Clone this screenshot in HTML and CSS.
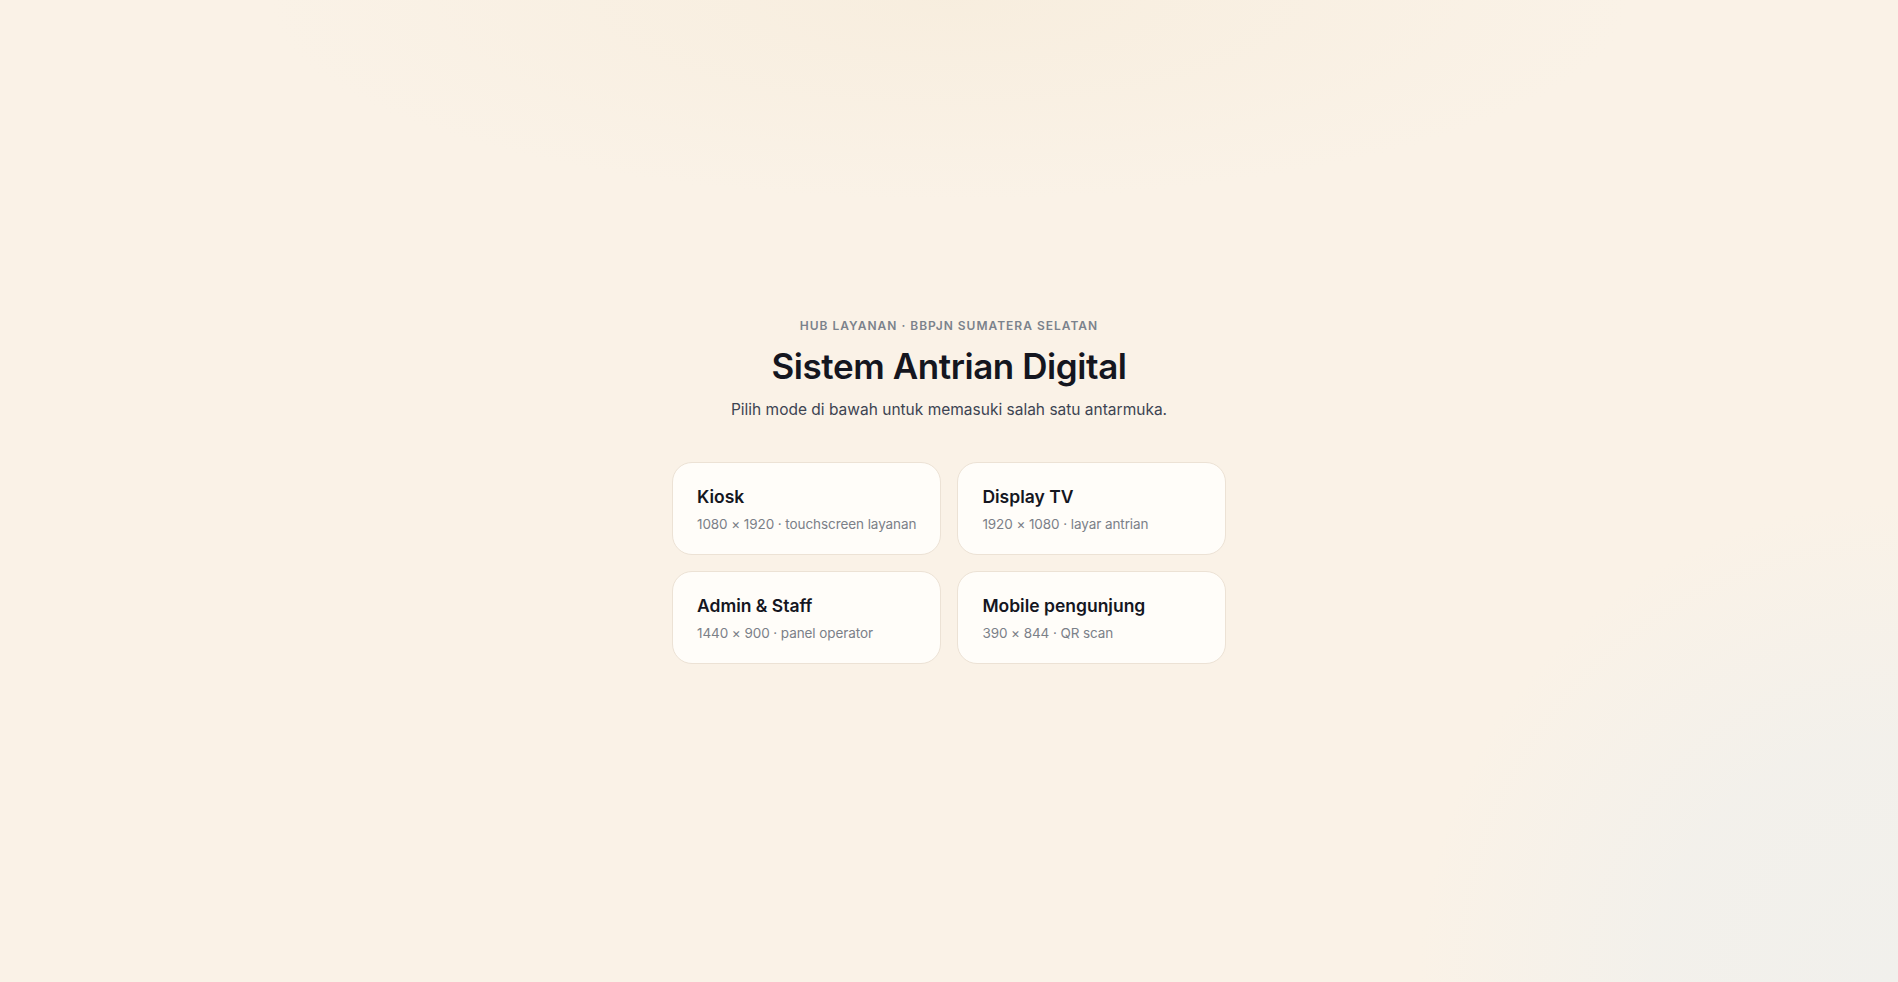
FILE: index.html
```html
<!DOCTYPE html>
<html lang="id">
<head>
  <meta charset="UTF-8">
  <meta name="viewport" content="width=device-width, initial-scale=1.0">
  <title>Sistem Antrian Digital</title>
  <link rel="stylesheet" href="styles.css">
</head>
<body>
  <main class="hub">
    <p class="eyebrow">Hub Layanan · BBPJN Sumatera Selatan</p>
    <h1>Sistem Antrian Digital</h1>
    <p class="lead">Pilih mode di bawah untuk memasuki salah satu antarmuka.</p>

    <div class="modes">
      <a href="kiosk.html" class="mode-card">
        <span class="mode-title">Kiosk</span>
        <span class="mode-meta">1080 × 1920 · touchscreen layanan</span>
      </a>
      <a href="display.html" class="mode-card">
        <span class="mode-title">Display TV</span>
        <span class="mode-meta">1920 × 1080 · layar antrian</span>
      </a>
      <a href="admin.html" class="mode-card">
        <span class="mode-title">Admin &amp; Staff</span>
        <span class="mode-meta">1440 × 900 · panel operator</span>
      </a>
      <a href="mobile.html" class="mode-card">
        <span class="mode-title">Mobile pengunjung</span>
        <span class="mode-meta">390 × 844 · QR scan</span>
      </a>
    </div>
  </main>
</body>
</html>
```

FILE: styles.css
```css
html, body {
  height: 100%;
}
body {
  font-family: Inter, 'Noto Sans', sans-serif;
  margin: 0;
  color: #14161f;
  background-color: #faf2e7;
  background-image:
    radial-gradient(ellipse 680px 200px at 50% 0, rgba(247, 237, 221, 0.85), rgba(247, 237, 221, 0) 100%),
    radial-gradient(circle 480px at 100% 100%, #f1f0ec 0%, rgba(241, 240, 236, 0.8) 50%, rgba(241, 240, 236, 0) 100%);
  display: flex;
  justify-content: center;
  align-items: center;
}
.hub {
  width: 554px;
  text-align: center;
}
.eyebrow {
  margin: 0;
  font-size: 12px;
  line-height: 16px;
  font-weight: 600;
  letter-spacing: 1px;
  text-transform: uppercase;
  color: #7b828c;
}
h1 {
  margin: 11px 0 0;
  font-size: 35px;
  line-height: 42px;
  font-weight: 600;
  letter-spacing: -0.012em;
}
.lead {
  margin: 12px 0 0;
  font-size: 15.5px;
  line-height: 22px;
  color: #3d4452;
}
.modes {
  margin-top: 41px;
  display: grid;
  grid-template-columns: 1fr 1fr;
  gap: 16px;
  text-align: left;
}
.mode-card {
  display: flex;
  flex-direction: column;
  gap: 6px;
  padding: 22px 24px 20px;
  background: #fffdf9;
  border: 1px solid #ece2d5;
  border-radius: 20px;
  text-decoration: none;
  color: inherit;
  transition: border-color 0.2s;
}
.mode-card:hover {
  border-color: #dccfbd;
}
.mode-title {
  font-size: 17.5px;
  line-height: 24px;
  font-weight: 600;
  color: #14161f;
}
.mode-meta {
  font-size: 13.5px;
  line-height: 19px;
  letter-spacing: -0.006em;
  white-space: nowrap;
  color: #7b8088;
}
```
